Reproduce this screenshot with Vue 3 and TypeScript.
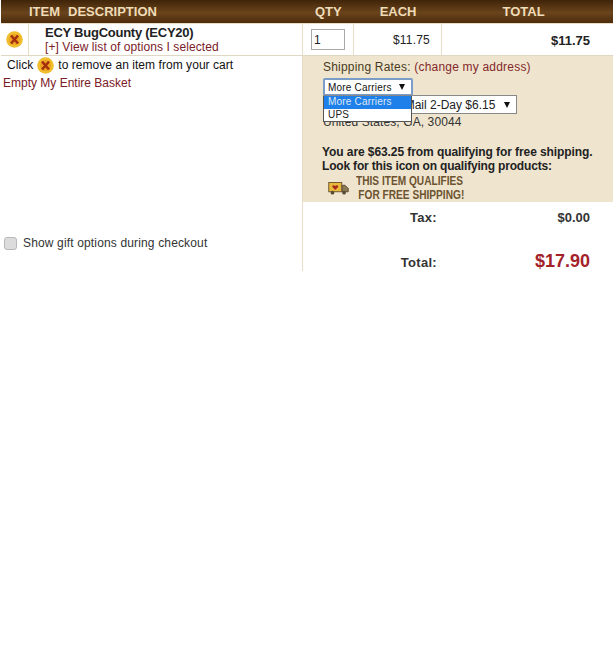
<script setup lang="ts">
interface CartItem {
  name: string
  qty: number
  each: string
  total: string
}

const item: CartItem = { name: 'ECY BugCounty (ECY20)', qty: 1, each: '$11.75', total: '$11.75' }
const carriers: string[] = ['More Carriers', 'UPS']
</script>

<template>
  <div class="cart">
    <div class="head">
      <span class="h-item">ITEM</span>
      <span class="h-desc">DESCRIPTION</span>
      <span class="h-qty">QTY</span>
      <span class="h-each">EACH</span>
      <span class="h-total">TOTAL</span>
    </div>

    <div class="row">
      <div class="c-x">
        <svg class="x-btn" width="17" height="17" viewBox="0 0 17 17">
          <circle cx="8.500" cy="8.500" r="8.300" fill="#f0bd2c" />
          <circle cx="8.500" cy="8.500" r="5.500" fill="#eda421" />
          <path d="M5 4.500 12 12.500M12 4.500 5 12.500" stroke="#a5300e" stroke-width="2.600" />
        </svg>
      </div>
      <div class="c-desc">
        <div class="name">{{ item.name }}</div>
        <a class="link opts">[+] View list of options I selected</a>
      </div>
      <div class="c-qty"><input class="qty" type="text" :value="item.qty" /></div>
      <div class="c-each">{{ item.each }}</div>
      <div class="c-total">{{ item.total }}</div>
    </div>

    <div class="body">
      <div class="left">
        <div class="hint">
          Click
          <svg class="x-btn" width="17" height="17" viewBox="0 0 17 17">
            <circle cx="8.500" cy="8.500" r="8.300" fill="#f0bd2c" />
            <circle cx="8.500" cy="8.500" r="5.500" fill="#eda421" />
            <path d="M5 4.500 12 12.500M12 4.500 5 12.500" stroke="#a5300e" stroke-width="2.600" />
          </svg>
          to remove an item from your cart
        </div>
        <a class="link empty">Empty My Entire Basket</a>
        <label class="gift"><input type="checkbox" />Show gift options during checkout</label>
      </div>

      <div class="right">
        <div class="ship">
          <div class="rates">Shipping Rates: <a class="link">(change my address)</a></div>
          <div class="selects">
            <div class="carrier">
              <span>More Carriers</span><span class="arrow"></span>
            </div>
            <div class="service">
              <span>USPS Priority Mail 2-Day $6.15</span><span class="arrow"></span>
            </div>
            <ul class="menu">
              <li v-for="(c, i) in carriers" :key="c" :class="{ on: i === 0 }">{{ c }}</li>
            </ul>
          </div>
          <div class="addr">United States, GA, 30044</div>
          <div class="free">
            <div class="l1">You are $63.25 from qualifying for free shipping.</div>
            <div class="l2">Look for this icon on qualifying products:</div>
          </div>
          <div class="badge">
            <svg class="truck" width="21" height="13" viewBox="0 0 22 14">
              <rect x="0.5" y="0.5" width="14" height="10" fill="#e9b93a" stroke="#6b5130" />
              <path d="M7.5 8.500 4.500 5.400C3.600 4 5.800 2.600 7.500 4.400 9.200 2.600 11.400 4 10.500 5.400Z" fill="#a8281f" />
              <path d="M15 3.500h3l3.500 3.500v3.500H15Z" fill="#8a7a55" stroke="#5f4b2c" />
              <circle cx="4.500" cy="11.500" r="2" fill="#5a4a30" />
              <circle cx="17" cy="11.500" r="2" fill="#5a4a30" />
            </svg>
            <div class="badge-text">
              <div>THIS ITEM QUALIFIES</div>
              <div class="second">FOR FREE SHIPPING!</div>
            </div>
          </div>
        </div>

        <div class="sum tax"><span class="sum-label">Tax:</span><span class="sum-val">$0.00</span></div>
        <div class="sum grand"><span class="sum-label">Total:</span><span class="sum-val big">$17.90</span></div>
      </div>
    </div>
  </div>
</template>

<style>
html, body {
  background: #fff;
}
</style>

<style scoped>
.cart {
  width: 613px;
  font-family: "Liberation Sans", Arial, sans-serif;
  font-size: 12px;
  color: #222;
}

.head {
  height: 23px;
  margin-left: 1px;
  display: flex;
  align-items: center;
  background: linear-gradient(#3f2409, #6a441c 55%, #4c2c0c);
  color: #efdcb8;
  font-weight: bold;
  font-size: 13px;
}
.h-item { margin-left: 28px; }
.h-desc { margin-left: 8px; }
.h-qty { margin-left: 158px; }
.h-each { margin-left: 38px; }
.h-total { margin-left: 86px; }

.row {
  height: 33px;
  display: flex;
  border-top: 1px solid #e8dcc6;
  border-bottom: 1px solid #e0d6c4;
  box-sizing: border-box;
  margin-left: 1px;
}
.row > div { border-right: 1px solid #e8dcc6; box-sizing: border-box; }
.c-x {
  width: 28px;
  display: flex;
  align-items: center;
  justify-content: center;
}
.c-desc { width: 274px; padding: 1px 0 0 16px; line-height: 15px; }
.name { font-size: 13px; font-weight: bold; letter-spacing: -0.25px; }
.opts { letter-spacing: 0.08px; }
.c-qty { width: 51px; padding: 5px 0 0 8px; }
.qty {
  display: block;
  width: 34px;
  height: 21px;
  box-sizing: border-box;
  border: 1px solid #a9a9a9;
  padding: 0 2px;
  font: 12px "Liberation Sans", Arial, sans-serif;
  color: #222;
}
.c-each { width: 88px; text-align: right; padding: 9px 11px 0 0; letter-spacing: 0.2px; }
.row > .c-total { flex: 1; border-right: 0; text-align: right; padding: 9px 23px 0 0; font-weight: bold; font-size: 13px; line-height: 15px; }

.x-btn { display: block; flex: none; }

.link { color: #7b2027; }

.body {
  display: grid;
  grid-template-columns: 302px 1fr;
}
.hint {
  display: flex;
  align-items: center;
  gap: 4px;
  padding-left: 7px;
  height: 18px;
  letter-spacing: 0.05px;
  color: #111;
}
.empty { display: block; padding-left: 3px; line-height: 16px; margin-top: 1px; }
.gift {
  display: flex;
  align-items: center;
  margin-top: 145px;
  padding-left: 4px;
  color: #333;
  letter-spacing: 0.15px;
}
.gift input {
  appearance: none;
  margin: 0 6px 0 0;
  width: 13px;
  height: 13px;
  background: #dcdcdc;
  border: 1px solid #b8b8b8;
  border-radius: 3px;
}

.right {
  border-left: 1px solid #e8dcc6;
  height: 215px;
}
.ship {
  height: 146px;
  box-sizing: border-box;
  background: #efe5cf;
  padding: 4px 0 0 20px;
  overflow: hidden;
}
.rates { line-height: 15px; color: #4a3a22; letter-spacing: 0.2px; }
.rates .link { color: #84282b; }
.selects { position: relative; margin-top: 3px; height: 37px; }
.carrier, .service {
  box-sizing: border-box;
  display: flex;
  align-items: center;
  background: #fff;
}
.carrier {
  width: 90px;
  height: 18px;
  border: 2px solid #7a9cc6;
  border-radius: 2px;
  padding-left: 3px;
  font-size: 10px;
  letter-spacing: 0.2px;
  color: #111;
  white-space: nowrap;
}
.service {
  position: absolute;
  left: 0;
  top: 17px;
  width: 194px;
  height: 19px;
  border: 1px solid #888;
  padding-left: 4px;
  white-space: nowrap;
  overflow: hidden;
  color: #222;
}
.arrow {
  margin-left: auto;
  margin-right: 6px;
  width: 0;
  height: 0;
  border-left: 3.500px solid transparent;
  border-right: 3.500px solid transparent;
  border-top: 6px solid #111;
  flex: none;
}
.menu {
  position: absolute;
  left: 0;
  top: 18px;
  width: 89px;
  box-sizing: border-box;
  margin: 0;
  padding: 0;
  list-style: none;
  background: #fff;
  border: 1px solid #555;
  border-top: 0;
  font-size: 10px;
  letter-spacing: 0.2px;
  line-height: 12.500px;
}
.menu li { padding-left: 4px; color: #222; }
.menu li.on { background: #1e80e8; color: #dfe9f6; }
.addr { line-height: 14px; letter-spacing: 0.1px; color: #333; }
.free {
  margin: 16px 0 0 -1px;
  font-weight: bold;
  line-height: 14px;
  color: #222;
  white-space: nowrap;
}
.l1 { letter-spacing: -0.08px; }
.l2 { letter-spacing: -0.18px; }
.badge { display: flex; align-items: flex-start; margin: 1px 0 0 5px; }
.truck { margin-top: 8px; }
.badge-text {
  margin-left: 7px;
  font-size: 13px;
  font-weight: bold;
  line-height: 14px;
  color: #6d5330;
  transform: scaleX(0.78);
  transform-origin: left;
  white-space: nowrap;
}
.second { padding-left: 3px; }

.sum {
  display: flex;
  font-weight: bold;
  align-items: baseline;
}
.sum-label { width: 134px; text-align: right; color: #333; font-size: 13px; letter-spacing: 0.3px; }
.sum-val { width: 153px; text-align: right; color: #333; font-size: 13px; }
.tax { margin-top: 8px; }
.grand { margin-top: 26px; }
.sum-val.big { font-size: 18px; color: #a3222a; }
</style>
